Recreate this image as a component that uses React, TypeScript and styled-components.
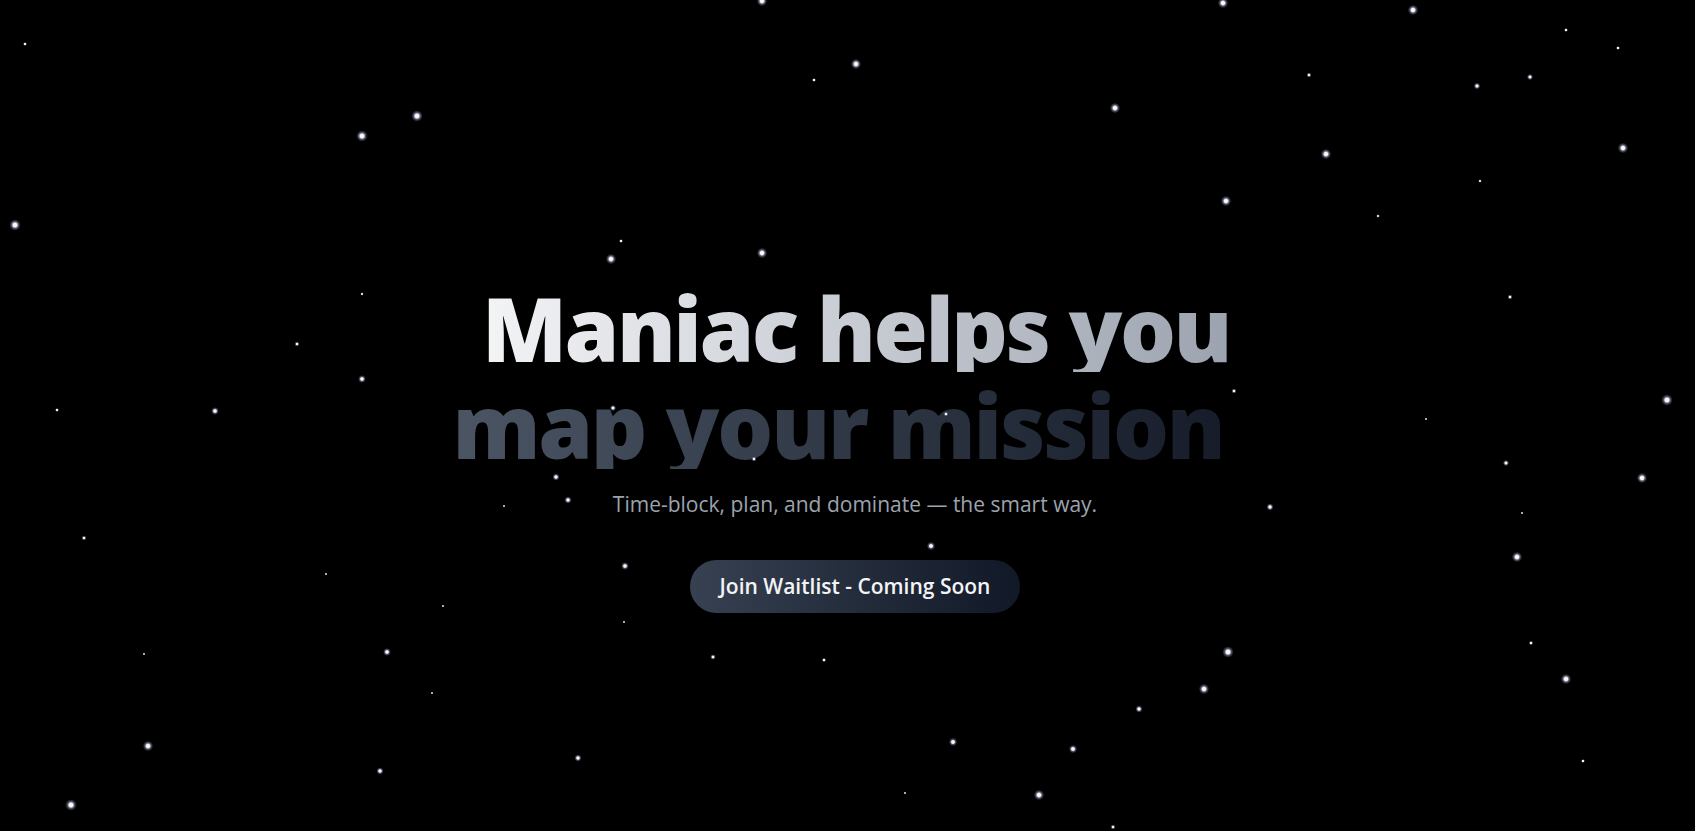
import * as React from 'react'
import styled, {createGlobalStyle} from 'styled-components'

const GlobalStyle = createGlobalStyle`
  html, body {
    margin: 0;
    padding: 0;
    background: #000;
  }
  * {
    box-sizing: border-box;
  }
`

const fontStack = `"Open Sans", "Noto Sans", "Liberation Sans", sans-serif`

const Page = styled.main`
  position: relative;
  min-height: 100vh;
  overflow: hidden;
  background: #000;
  display: flex;
  flex-direction: column;
  align-items: center;
  padding: 284px 0 0 15px;
  font-family: ${fontStack};
`

const StarField = styled.svg`
  position: absolute;
  inset: 0;
  width: 100%;
  height: 100%;
  pointer-events: none;
  z-index: 2;
`

const Hero = styled.section`
  position: relative;
  z-index: 1;
  display: flex;
  flex-direction: column;
  align-items: center;
`

const Headline = styled.h1`
  margin: 0;
  display: flex;
  flex-direction: column;
  align-items: center;
  gap: 9px;
  font-size: 88px;
  font-weight: 800;
  line-height: 1;
`

const HeadLine = styled.span<{ $from: string; $to: string; $shift: number; $spacing: number }>`
  display: inline-block;
  white-space: nowrap;
  letter-spacing: ${p => p.$spacing}px;
  background: linear-gradient(to right, ${p => p.$from}, ${p => p.$to});
  -webkit-background-clip: text;
  background-clip: text;
  color: transparent;
  -webkit-text-fill-color: transparent;
  transform: translateX(${p => p.$shift}px);
`

const Tagline = styled.p`
  margin: 21px 0 0;
  font-size: 21px;
  line-height: 28px;
  color: #9ca3af;
  font-weight: 400;
`

const WaitlistButton = styled.button`
  margin-top: 42px;
  padding: 12px 30px;
  border: none;
  border-radius: 999px;
  background: linear-gradient(to right, #374151, #111827);
  color: #f3f4f6;
  font-family: ${fontStack};
  font-size: 21px;
  font-weight: 600;
  line-height: 29px;
  cursor: pointer;
  box-shadow: 0 4px 14px rgba(0, 0, 0, 0.4);
`

// x, y, radius (page pixels)
const stars: [number, number, number][] = [
  [762, 1, 2], [1223, 3, 2], [1413, 10, 2], [25, 44, 0.8], [856, 64, 2], [814, 80, 0.8],
  [1566, 30, 0.8], [1618, 48, 0.8], [417, 116, 2.2], [362, 136, 2.2], [1115, 108, 2],
  [1309, 75, 1], [1477, 86, 1.3], [1530, 77, 1.2], [1326, 154, 2], [1623, 148, 2],
  [15, 225, 2.2], [1226, 201, 2], [1378, 216, 0.7], [1480, 181, 0.7], [621, 241, 0.8],
  [611, 259, 2], [762, 253, 2], [362, 294, 0.7], [297, 344, 1], [1510, 297, 1],
  [362, 379, 1.5], [215, 411, 1.5], [57, 410, 0.8],
  [1234, 391, 1], [1667, 400, 2.2], [1426, 419, 0.6], [1506, 463, 1.2], [1642, 478, 2],
  [1270, 507, 1.4], [1522, 513, 0.6], [1517, 557, 2], [1531, 643, 0.9], [1228, 652, 2.2],
  [1566, 679, 2], [1204, 689, 2],
  [556, 477, 1.4], [568, 500, 1.4], [504, 506, 0.6], [84, 538, 1], [931, 546, 1.6],
  [625, 566, 1.5], [326, 574, 0.6], [443, 606, 0.6], [624, 622, 0.6], [387, 652, 1.5],
  [144, 654, 0.6], [713, 657, 1.1], [824, 660, 0.9], [432, 693, 0.6], [1139, 709, 1.4],
  [953, 742, 1.6], [148, 746, 2], [1073, 749, 1.6], [578, 758, 1.4], [1583, 761, 0.8],
  [380, 771, 1.4], [1039, 795, 2], [71, 805, 2.2], [905, 793, 0.6], [1113, 827, 1],
  [613, 408, 1.2], [754, 459, 1], [946, 414, 0.9],
]

const Stars = () => (
  <StarField viewBox="0 0 1695 831" preserveAspectRatio="xMidYMid slice">
    <defs>
      <radialGradient id="glow">
        <stop offset="0%" stopColor="#ffffff" stopOpacity="1"/>
        <stop offset="35%" stopColor="#ffffff" stopOpacity="0.95"/>
        <stop offset="60%" stopColor="#c7d2fe" stopOpacity="0.4"/>
        <stop offset="100%" stopColor="#c7d2fe" stopOpacity="0"/>
      </radialGradient>
    </defs>
    {stars.map(([x, y, r], i) => (
      <circle key={i} cx={x} cy={y} r={r * 2.6} fill="url(#glow)"/>
    ))}
  </StarField>
)

export default function App() {
  return <Page>
    <GlobalStyle/>
    <Stars/>
    <Hero>
      <Headline>
        <HeadLine $from="#f3f4f6" $to="#9ca3af" $shift={1} $spacing={-2.5}>Maniac helps you</HeadLine>
        <HeadLine $from="#4b5563" $to="#161c2a" $shift={-17} $spacing={-2.2}>map your mission</HeadLine>
      </Headline>
      <Tagline>Time-block, plan, and dominate — the smart way.</Tagline>
      <WaitlistButton>Join Waitlist - Coming Soon</WaitlistButton>
    </Hero>
  </Page>
}
